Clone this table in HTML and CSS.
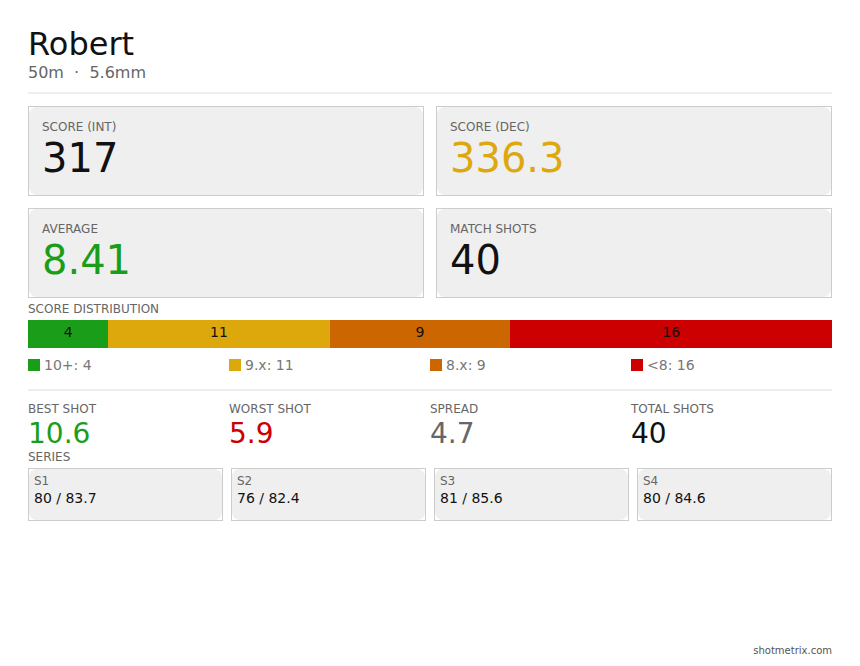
FILE: index.html
```html
<!DOCTYPE html>
<html>
<head>
<meta charset="utf-8">
<link rel="stylesheet" href="styles.css">
</head>
<body>
<div class="page">
  <header class="head">
    <h1 class="name">Robert</h1>
    <div class="sub">50m &nbsp;·&nbsp; 5.6mm</div>
  </header>
  <hr class="rule rule-head">

  <div class="cards">
    <div class="card"><div class="card-in">
      <div class="label">SCORE (INT)</div>
      <div class="big">317</div>
    </div></div>
    <div class="card"><div class="card-in">
      <div class="label">SCORE (DEC)</div>
      <div class="big c-yellow">336.3</div>
    </div></div>
    <div class="card"><div class="card-in">
      <div class="label">AVERAGE</div>
      <div class="big c-green">8.41</div>
    </div></div>
    <div class="card"><div class="card-in">
      <div class="label">MATCH SHOTS</div>
      <div class="big">40</div>
    </div></div>
  </div>

  <div class="label sec-dist">SCORE DISTRIBUTION</div>
  <div class="bar">
    <div class="seg bg-green" style="flex: 4">4</div>
    <div class="seg bg-yellow" style="flex: 11">11</div>
    <div class="seg bg-orange" style="flex: 9">9</div>
    <div class="seg bg-red" style="flex: 16">16</div>
  </div>
  <div class="legend">
    <div class="leg"><span class="sw bg-green"></span>10+: 4</div>
    <div class="leg"><span class="sw bg-yellow"></span>9.x: 11</div>
    <div class="leg"><span class="sw bg-orange"></span>8.x: 9</div>
    <div class="leg"><span class="sw bg-red"></span>&lt;8: 16</div>
  </div>
  <hr class="rule rule-mid">

  <div class="stats">
    <div class="stat">
      <div class="label">BEST SHOT</div>
      <div class="mid c-green">10.6</div>
    </div>
    <div class="stat">
      <div class="label">WORST SHOT</div>
      <div class="mid c-red">5.9</div>
    </div>
    <div class="stat">
      <div class="label">SPREAD</div>
      <div class="mid c-gray">4.7</div>
    </div>
    <div class="stat">
      <div class="label">TOTAL SHOTS</div>
      <div class="mid">40</div>
    </div>
  </div>

  <div class="label">SERIES</div>
  <div class="series">
    <div class="scard"><div class="scard-in"><div class="label">S1</div><div class="sval">80 / 83.7</div></div></div>
    <div class="scard"><div class="scard-in"><div class="label">S2</div><div class="sval">76 / 82.4</div></div></div>
    <div class="scard"><div class="scard-in"><div class="label">S3</div><div class="sval">81 / 85.6</div></div></div>
    <div class="scard"><div class="scard-in"><div class="label">S4</div><div class="sval">80 / 84.6</div></div></div>
  </div>

  <footer class="foot">shotmetrix.com</footer>
</div>
</body>
</html>
```

FILE: styles.css
```css
html, body {
  margin: 0;
  padding: 0;
  background: #fff;
}
body {
  font-family: "DejaVu Sans", "Liberation Sans", sans-serif;
  color: #111;
}
.page {
  box-sizing: border-box;
  min-height: 666px;
  padding: 26px 28px 9px;
  display: flex;
  flex-direction: column;
}
.name {
  margin: 0;
  font-size: 32px;
  font-weight: normal;
  line-height: 37px;
  color: #111;
}
.sub {
  margin-top: 0;
  font-size: 16px;
  line-height: 19px;
  color: #666;
}
.rule {
  border: 0;
  height: 2px;
  background: #eeeeee;
  margin: 0;
}
.rule-head { margin-top: 10px; }
.cards {
  margin-top: 12px;
  display: grid;
  grid-template-columns: 1fr 1fr;
  gap: 12px;
}
.card {
  border: 1px solid #cccccc;
  height: 90px;
  box-sizing: border-box;
}
.card-in {
  height: 100%;
  box-sizing: border-box;
  background: #efefef;
  border-radius: 8px;
  padding: 13px 13px 0;
}
.label {
  font-size: 12px;
  line-height: 14px;
  color: #666;
}
.big {
  margin-top: 1px;
  font-size: 40px;
  line-height: 46px;
}
.mid {
  margin-top: 2px;
  font-size: 28px;
  line-height: 32px;
}
.c-yellow { color: #dca80e; }
.c-green { color: #1a9e1a; }
.c-red { color: #cc0000; }
.c-gray { color: #666; }
.bg-green { background: #1a9e1a; }
.bg-yellow { background: #dda80c; }
.bg-orange { background: #cc6600; }
.bg-red { background: #cc0000; }
.sec-dist { margin-top: 4px; }
.bar {
  margin-top: 4px;
  display: flex;
  height: 28px;
}
.seg {
  font-size: 14px;
  line-height: 24px;
  text-align: center;
  color: #111;
}
.legend {
  margin-top: 9px;
  display: grid;
  grid-template-columns: repeat(4, 1fr);
}
.leg {
  display: flex;
  align-items: center;
  font-size: 14px;
  line-height: 16px;
  color: #777;
}
.sw {
  width: 12px;
  height: 12px;
  margin-right: 4px;
  flex: none;
}
.rule-mid { margin-top: 16px; }
.stats {
  margin-top: 11px;
  display: grid;
  grid-template-columns: repeat(4, 1fr);
}
.series {
  margin-top: 4px;
  display: grid;
  grid-template-columns: repeat(4, 1fr);
  gap: 8px;
}
.scard {
  border: 1px solid #cccccc;
  height: 53px;
  box-sizing: border-box;
}
.scard-in {
  height: 100%;
  box-sizing: border-box;
  background: #efefef;
  border-radius: 8px;
  padding: 5px 5px 0;
}
.sval {
  margin-top: 2px;
  font-size: 14px;
  line-height: 16px;
  color: #111;
}
.foot {
  margin-top: auto;
  text-align: right;
  font-size: 10px;
  line-height: 12px;
  color: #555;
}
```
